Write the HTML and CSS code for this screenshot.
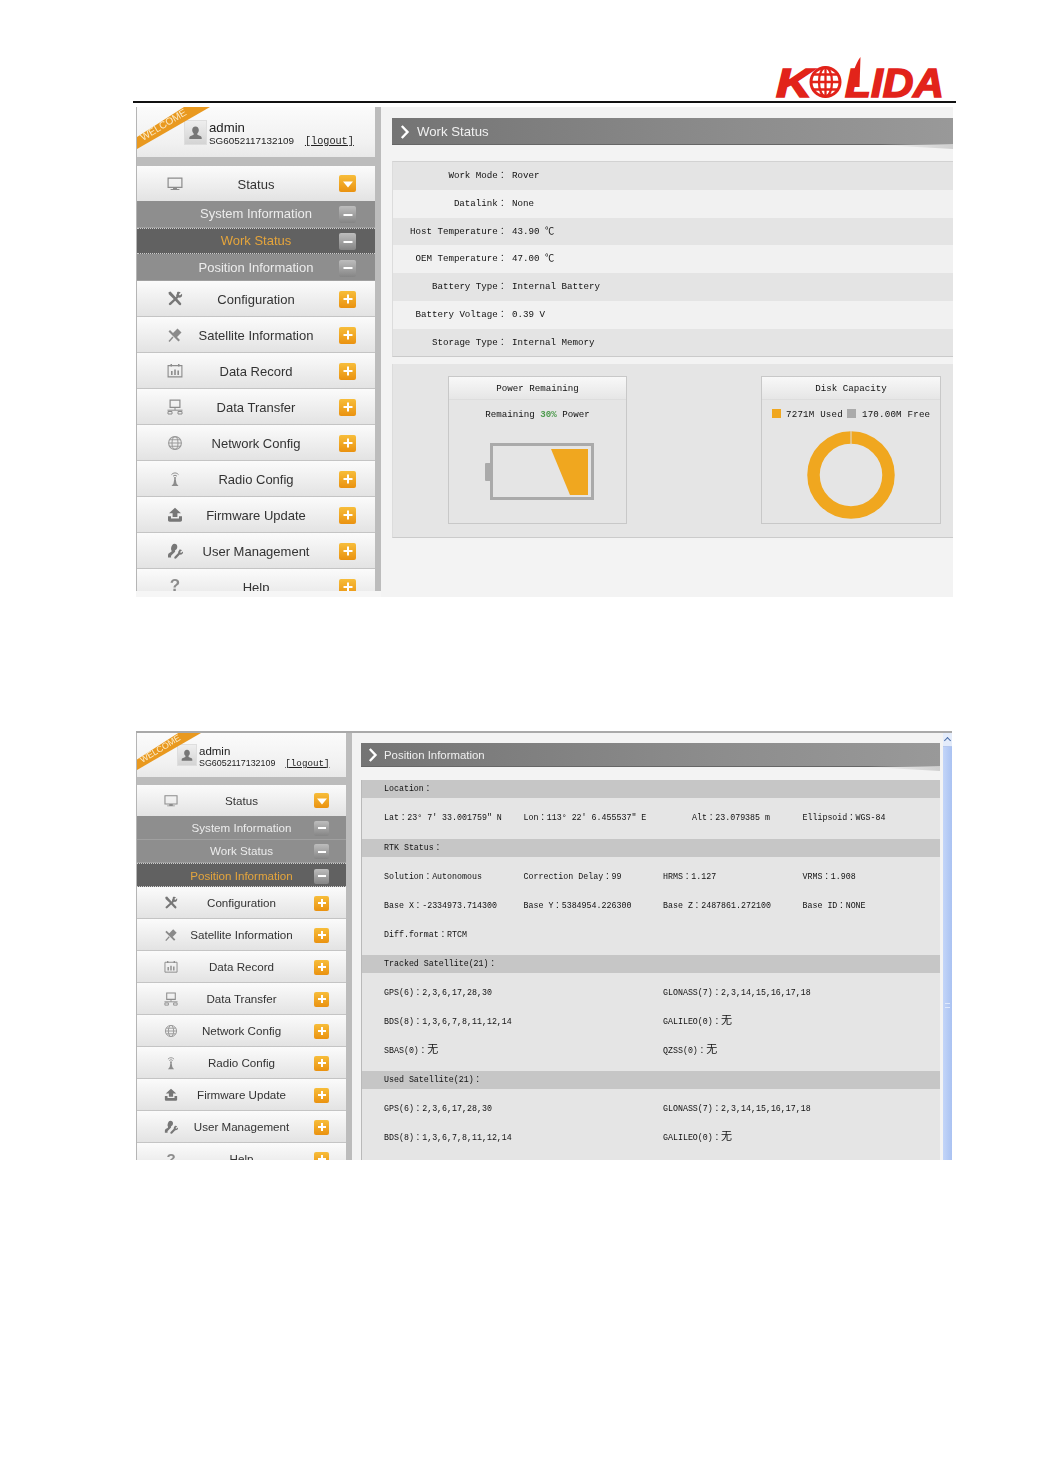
FILE: index.html
```html
<!DOCTYPE html>
<html lang="en">
<head>
<meta charset="utf-8">
<title>Kolida receiver web interface</title>
<link rel="stylesheet" href="styles.css">
</head>
<body>
<svg class="defs" aria-hidden="true">
  <symbol id="i-monitor" viewBox="0 0 16 16"><path fill="none" stroke="#8c8c8c" stroke-width="1.2" d="M1.1 2.1h13.8v9.3H1.1z"/><path fill="#8c8c8c" d="M6 11.5h4v1.6h2.4v1H3.6v-1H6z"/></symbol>
  <symbol id="i-tools" viewBox="0 0 16 16"><path fill="#777" d="M1.5 1.2l2-.6 4.6 5 5.8 6.4c.6.7.4 1.4-.1 1.9-.5.5-1.2.5-1.8-.1L6.400 7.700 1.800 3.300z"/><path fill="#777" d="M10.200 1.100c1.300-.5 2.600-.3 3.500.4l-2 1.800 1.200 1.200 2-1.800c.5 1.300.2 2.500-.6 3.300-.8.700-1.800.9-2.800.6L4 13.700c-.6.600-1.400.6-1.900.1-.5-.6-.4-1.300.2-1.800l7-6.200c-.3-1-.1-2.100.6-2.800z"/></symbol>
  <symbol id="i-sat" viewBox="0 0 16 16"><path fill="#8a8a8a" d="M10.500 1.500l4 4-5 5-4-4zM1.500 4.500L3 3l10 10-1.500 1.500z"/><path stroke="#8a8a8a" stroke-width="1.400" d="M6 10l-4 4.500"/></symbol>
  <symbol id="i-cal" viewBox="0 0 16 16"><path fill="none" stroke="#8c8c8c" stroke-width="1.100" d="M1.100 2.600h13.800v11.300H1.100z"/><path fill="#8c8c8c" d="M3.500 1h1.500v2.500H3.500zM11 1h1.500v2.500H11zM4 8h1.600v4H4zM7.200 6.500h1.600V12H7.200zM10.400 7.500H12V12h-1.600z"/></symbol>
  <symbol id="i-net" viewBox="0 0 16 16"><path fill="none" stroke="#8c8c8c" stroke-width="1.200" d="M3.100 1.100h9.800v7.300H3.100z"/><path fill="none" stroke="#8c8c8c" d="M8 8.500v2.500M.5 11.200h15"/><path fill="none" stroke="#8c8c8c" d="M1 12.500h4v2.500H1zM11 12.500h4v2.500h-4z"/></symbol>
  <symbol id="i-globe" viewBox="0 0 16 16"><g fill="none" stroke="#9a9a9a" stroke-width="1.100"><circle cx="8" cy="8" r="6.400"/><ellipse cx="8" cy="8" rx="3" ry="6.400"/><path d="M1.600 8h12.800M2.500 4.800h11M2.500 11.200h11"/></g></symbol>
  <symbol id="i-radio" viewBox="0 0 16 16"><g fill="none" stroke="#8c8c8c"><path d="M4.500 3.600C6.500 1.400 9.500 1.400 11.500 3.600M6 5.300C7.100 4 8.900 4 10 5.300"/></g><circle cx="8" cy="7" r="1.100" fill="#8c8c8c"/><path fill="#8c8c8c" d="M7.300 8h1.400l.8 4.500 2 2.500H4.500l2-2.500z"/></symbol>
  <symbol id="i-up" viewBox="0 0 16 16"><path fill="#777" d="M8 .8L14 6.200H10.400V10H5.600V6.200H2zM1 9.200h3v2.300h8V9.200h3V13c0 1-.7 1.700-1.700 1.700H2.700C1.700 14.700 1 14 1 13z"/></symbol>
  <symbol id="i-user" viewBox="0 0 16 16"><path fill="#777" d="M7.400.8c1.800 0 2.900 1.300 2.900 3 0 1.700-.9 3-2.200 3.400v1.500l-3.600 3.500c-.6.600-.6 1.500-.3 2.300H1v-2.500c0-1.700 2.400-2.500 3.500-3.200V7.200C3.500 6.700 4.300.8 7.400.800z"/><path fill="#777" d="M12.500 6.500c.9-.2 1.900.1 2.500.8L13 9l1 1.100 2-1.600c.2 1-.1 2-.9 2.600-.6.500-1.400.7-2.200.5l-3.600 3.700c-.5.500-1.200.5-1.700.1-.5-.5-.5-1.200 0-1.700l3.600-3.700c-.2-.9.100-1.800.8-2.500z"/></symbol>
  <symbol id="i-avatar" viewBox="0 0 24 25"><path fill="#777" d="M12 5.500c2.400 0 3.800 1.900 3.800 4.200 0 1.600-.7 3-1.700 3.800v1.600l4 1.700c.9.400 1 1.500 1 3.200H4.900c0-1.700.1-2.800 1-3.200l4-1.700v-1.600c-1-.8-1.700-2.200-1.700-3.800 0-2.300 1.400-4.200 3.800-4.200z"/></symbol>
  <symbol id="i-chev" viewBox="0 0 10 14"><path fill="none" stroke="#fff" stroke-width="2.400" d="M1.800 1l5.700 6-5.700 6"/></symbol>
</svg>

<header class="doc-header">
  <svg class="logo" viewBox="0 0 170 43" role="img" aria-label="Kolida">
    <text class="logo-text" x="2" y="40" textLength="36" lengthAdjust="spacingAndGlyphs">K</text>
    <g fill="none" stroke="#e2231a">
      <circle cx="51.500" cy="25" r="14.500" stroke-width="3"/>
      <ellipse cx="51.500" cy="25" rx="6.500" ry="14.500" stroke-width="2.300"/>
      <path stroke-width="2.300" d="M51.500 10.500v29M37.500 25h28M39.500 17.500h24M39.500 32.500h24"/>
    </g>
    <path fill="#e2231a" d="M86.500 0C82 6 79 14 75.500 30H85.500z"/>
    <text class="logo-text" x="71" y="40" textLength="99" lengthAdjust="spacingAndGlyphs">LIDA</text>
  </svg>
</header>

<section class="shot shot-work">
  <aside class="sidebar">
    <div class="welcome">
      <svg class="ribbon" viewBox="0 0 73 42" aria-hidden="true"><polygon fill="#e9991f" points="0,30 47,0 73,0 0,42"/><text class="ribbon-text" transform="translate(6 34) rotate(-31)">WELCOME</text></svg>
      <svg class="avatar"><use href="#i-avatar"/></svg>
      <div class="who">
        <div class="who-name">admin</div>
        <div class="who-line"><span class="serial">SG6052117132109</span><span class="logout">[logout]</span></div>
      </div>
    </div>
    <nav class="menu">
      <div class="row row-open"><svg class="ico"><use href="#i-monitor"/></svg><span class="lbl">Status</span><span class="btn btn-down"></span></div>
      <div class="sub"><span></span><span class="lbl">System Information</span><span class="btn btn-minus"></span></div>
      <div class="sub sub-active"><span></span><span class="lbl">Work Status</span><span class="btn btn-minus"></span></div>
      <div class="sub"><span></span><span class="lbl">Position Information</span><span class="btn btn-minus"></span></div>
      <div class="row"><svg class="ico"><use href="#i-tools"/></svg><span class="lbl">Configuration</span><span class="btn btn-plus"></span></div>
      <div class="row"><svg class="ico"><use href="#i-sat"/></svg><span class="lbl">Satellite Information</span><span class="btn btn-plus"></span></div>
      <div class="row"><svg class="ico"><use href="#i-cal"/></svg><span class="lbl">Data Record</span><span class="btn btn-plus"></span></div>
      <div class="row"><svg class="ico"><use href="#i-net"/></svg><span class="lbl">Data Transfer</span><span class="btn btn-plus"></span></div>
      <div class="row"><svg class="ico"><use href="#i-globe"/></svg><span class="lbl">Network Config</span><span class="btn btn-plus"></span></div>
      <div class="row"><svg class="ico"><use href="#i-radio"/></svg><span class="lbl">Radio Config</span><span class="btn btn-plus"></span></div>
      <div class="row"><svg class="ico"><use href="#i-up"/></svg><span class="lbl">Firmware Update</span><span class="btn btn-plus"></span></div>
      <div class="row"><svg class="ico"><use href="#i-user"/></svg><span class="lbl">User Management</span><span class="btn btn-plus"></span></div>
      <div class="row"><span class="ico-q">?</span><span class="lbl">Help</span><span class="btn btn-plus"></span></div>
    </nav>
  </aside>
  <main class="main">
    <h2 class="title"><svg class="chev"><use href="#i-chev"/></svg>Work Status</h2>
    <div class="kv-table">
      <div class="kv"><span class="k">Work Mode：</span><span>Rover</span></div>
      <div class="kv"><span class="k">Datalink：</span><span>None</span></div>
      <div class="kv"><span class="k">Host Temperature：</span><span>43.90 ℃</span></div>
      <div class="kv"><span class="k">OEM Temperature：</span><span>47.00 ℃</span></div>
      <div class="kv"><span class="k">Battery Type：</span><span>Internal Battery</span></div>
      <div class="kv"><span class="k">Battery Voltage：</span><span>0.39 V</span></div>
      <div class="kv"><span class="k">Storage Type：</span><span>Internal Memory</span></div>
    </div>
    <div class="gauges">
      <div class="card">
        <div class="card-head">Power Remaining</div>
        <div class="card-cap">Remaining&nbsp;<b class="pct">30%</b>&nbsp;Power</div>
        <svg class="battery" viewBox="0 0 109 57" aria-hidden="true">
          <rect x="0" y="20" width="6" height="18" rx="1" fill="#aaa"/>
          <rect x="6.500" y="1.500" width="101" height="54" fill="none" stroke="#aaa" stroke-width="3"/>
          <polygon fill="#f0a71f" points="66,6 103,6 103,52 85,52"/>
        </svg>
      </div>
      <div class="card card-disk">
        <div class="card-head">Disk Capacity</div>
        <div class="card-cap card-legend"><i class="sq sq-used"></i><span>7271M Used</span><i class="sq sq-free"></i><span>170.00M Free</span></div>
        <svg class="donut" viewBox="0 0 88 88" aria-hidden="true">
          <circle cx="44" cy="44" r="37.500" fill="none" stroke="#f0a71f" stroke-width="12.500"/>
          <path d="M44 0v14" stroke="#ddd" stroke-width="1"/>
        </svg>
      </div>
    </div>
  </main>
</section>

<section class="shot shot-pos">
  <aside class="sidebar">
    <div class="welcome">
      <svg class="ribbon" viewBox="0 0 73 42" aria-hidden="true"><polygon fill="#e9991f" points="0,30 47,0 73,0 0,42"/><text class="ribbon-text" transform="translate(6 34) rotate(-31)">WELCOME</text></svg>
      <svg class="avatar"><use href="#i-avatar"/></svg>
      <div class="who">
        <div class="who-name">admin</div>
        <div class="who-line"><span class="serial">SG6052117132109</span><span class="logout">[logout]</span></div>
      </div>
    </div>
    <nav class="menu">
      <div class="row row-open"><svg class="ico"><use href="#i-monitor"/></svg><span class="lbl">Status</span><span class="btn btn-down"></span></div>
      <div class="sub"><span></span><span class="lbl">System Information</span><span class="btn btn-minus"></span></div>
      <div class="sub"><span></span><span class="lbl">Work Status</span><span class="btn btn-minus"></span></div>
      <div class="sub sub-active"><span></span><span class="lbl">Position Information</span><span class="btn btn-minus"></span></div>
      <div class="row"><svg class="ico"><use href="#i-tools"/></svg><span class="lbl">Configuration</span><span class="btn btn-plus"></span></div>
      <div class="row"><svg class="ico"><use href="#i-sat"/></svg><span class="lbl">Satellite Information</span><span class="btn btn-plus"></span></div>
      <div class="row"><svg class="ico"><use href="#i-cal"/></svg><span class="lbl">Data Record</span><span class="btn btn-plus"></span></div>
      <div class="row"><svg class="ico"><use href="#i-net"/></svg><span class="lbl">Data Transfer</span><span class="btn btn-plus"></span></div>
      <div class="row"><svg class="ico"><use href="#i-globe"/></svg><span class="lbl">Network Config</span><span class="btn btn-plus"></span></div>
      <div class="row"><svg class="ico"><use href="#i-radio"/></svg><span class="lbl">Radio Config</span><span class="btn btn-plus"></span></div>
      <div class="row"><svg class="ico"><use href="#i-up"/></svg><span class="lbl">Firmware Update</span><span class="btn btn-plus"></span></div>
      <div class="row"><svg class="ico"><use href="#i-user"/></svg><span class="lbl">User Management</span><span class="btn btn-plus"></span></div>
      <div class="row"><span class="ico-q">?</span><span class="lbl">Help</span><span class="btn btn-plus"></span></div>
    </nav>
  </aside>
  <main class="main">
    <h2 class="title"><svg class="chev"><use href="#i-chev"/></svg>Position Information</h2>
    <div class="sec sec-first">
      <div class="sec-head">Location：</div>
      <div class="sec-body">
        <div class="grid4">
          <span>Lat：23° 7′ 33.001759″ N</span><span>Lon：113° 22′ 6.455537″ E</span><span class="alt">Alt：23.079385 m</span><span>Ellipsoid：WGS-84</span>
        </div>
      </div>
    </div>
    <div class="sec">
      <div class="sec-head">RTK Status：</div>
      <div class="sec-body">
        <div class="grid4">
          <span>Solution：Autonomous</span><span>Correction Delay：99</span><span>HRMS：1.127</span><span>VRMS：1.908</span>
          <span>Base X：-2334973.714300</span><span>Base Y：5384954.226300</span><span>Base Z：2487861.272100</span><span>Base ID：NONE</span>
          <span>Diff.format：RTCM</span>
        </div>
      </div>
    </div>
    <div class="sec">
      <div class="sec-head">Tracked Satellite(21)：</div>
      <div class="sec-body">
        <div class="grid2">
          <span>GPS(6)：2,3,6,17,28,30</span><span>GLONASS(7)：2,3,14,15,16,17,18</span>
          <span>BDS(8)：1,3,6,7,8,11,12,14</span><span>GALILEO(0)：<em class="none">无</em></span>
          <span>SBAS(0)：<em class="none">无</em></span><span>QZSS(0)：<em class="none">无</em></span>
        </div>
      </div>
    </div>
    <div class="sec sec-last">
      <div class="sec-head">Used Satellite(21)：</div>
      <div class="sec-body">
        <div class="grid2">
          <span>GPS(6)：2,3,6,17,28,30</span><span>GLONASS(7)：2,3,14,15,16,17,18</span>
          <span>BDS(8)：1,3,6,7,8,11,12,14</span><span>GALILEO(0)：<em class="none">无</em></span>
        </div>
      </div>
    </div>
  </main>
  <div class="scrollbar" aria-hidden="true">
    <span class="scroll-up"></span>
    <span class="scroll-grip"></span>
  </div>
</section>
</body>
</html>
```
FILE: styles.css
```css
* { box-sizing: border-box; }

html, body { margin: 0; padding: 0; background: #fff; }

body {
  width: 1043px;
  height: 1474px;
  overflow: hidden;
  font-family: "Liberation Sans", "Noto Sans CJK SC", sans-serif;
  color: #222;
}

.defs { width: 0; height: 0; position: absolute; }

/* document header */
.doc-header {
  width: 823px;
  height: 103px;
  margin-left: 133px;
  padding: 57px 12px 0 0;
  display: flex;
  justify-content: flex-end;
  align-items: flex-start;
  border-bottom: 2px solid #111;
}

.logo { width: 170px; height: 43px; overflow: visible; }

.logo-text {
  font-family: "Liberation Sans", sans-serif;
  font-weight: 700;
  font-style: italic;
  font-size: 40px;
  fill: #e2231a;
  stroke: #e2231a;
  stroke-width: 1.6px;
}

/* screenshot blocks */
.shot {
  display: flex;
  align-items: flex-start;
  margin-left: 136px;
  overflow: hidden;
  background: #f6f6f6;
  filter: blur(0.3px);
  --mono: "Liberation Mono", "Noto Sans CJK TC", monospace;
}

.shot-work {
  width: 817px;
  height: 490px;
  margin-top: 4px;
  --side-w: 239px;
  --side-h: 484px;
  --welcome-h: 50px;
  --gap-h: 9px;
  --row-h: 36px;
  --first-h: 35px;
  --sub-h: 26.67px;
  --col: 76px;
  --lbl: 13px;
  --lbl-top: 2px;
  --sub-top: 0px;
  --ico: 16px;
  --btn: 17px;
  --btn-end: 19px;
  --btn-bar: 9px;
  --ava-l: 48px;
  --ava: 23px;
  --name: 13.2px;
  --serial: 9.9px;
  --logout: 10.2px;
  --logout-gap: 11px;
  --ribbon-w: 73px;
  --ribbon-h: 42px;
}

.shot-pos {
  width: 816px;
  height: 429px;
  margin-top: 134px;
  border-top: 2px solid #a9a9a9;
  background: #fff;
  --side-w: 210px;
  --side-h: 427px;
  --welcome-h: 44px;
  --gap-h: 8px;
  --row-h: 32px;
  --first-h: 31px;
  --sub-h: 23.67px;
  --col: 68px;
  --lbl: 11.6px;
  --lbl-top: 0px;
  --sub-top: 0px;
  --ico: 14px;
  --btn: 15px;
  --btn-end: 17px;
  --btn-bar: 8px;
  --ava-l: 41px;
  --ava: 20px;
  --name: 11.5px;
  --serial: 8.9px;
  --logout: 9.2px;
  --logout-gap: 10px;
  --ribbon-w: 64px;
  --ribbon-h: 37px;
}

/* sidebar */
.sidebar {
  flex: none;
  width: calc(var(--side-w) + 6px);
  height: var(--side-h);
  overflow: hidden;
  background: #bcbcbc;
  border-left: 1px solid #b5b5b5;
  border-right: 6px solid #bcbcbc;
}

.welcome {
  position: relative;
  height: var(--welcome-h);
  margin-bottom: var(--gap-h);
  padding-left: calc(var(--ava-l) - 1px);
  display: flex;
  align-items: center;
  gap: 2px;
  background: linear-gradient(#fbfbfb, #f1f1f1 70%, #e9e9e9);
}

.ribbon {
  position: absolute;
  left: 0;
  top: 0;
  width: var(--ribbon-w);
  height: var(--ribbon-h);
}

.ribbon-text {
  font-size: 10px;
  fill: #fbeccb;
}

.avatar {
  flex: none;
  width: var(--ava);
  height: calc(var(--ava) + 2px);
  background: linear-gradient(#eee, #d4d4d4);
  border: 1px solid #dedede;
}

.who { padding-top: 4px; }

.who-name { font-size: var(--name); line-height: 1.05; }

.who-line {
  display: flex;
  align-items: baseline;
  gap: var(--logout-gap);
  white-space: nowrap;
}

.serial { font-size: var(--serial); }

.logout {
  font-family: var(--mono);
  font-size: var(--logout);
  text-decoration: underline;
}

.row, .sub {
  display: grid;
  grid-template-columns: var(--col) minmax(0, 1fr) var(--col);
  align-items: center;
}

.row {
  height: var(--row-h);
  background: linear-gradient(#fbfbfb, #e3e3e3);
  border-bottom: 1px solid #c4c4c4;
  color: #333;
}

.row-open { height: var(--first-h); border-bottom: 0; }

.sub {
  height: var(--sub-h);
  background: #8e8e8e;
  color: #ececec;
  border-bottom: 1px solid #a0a0a0;
}

.sub-active {
  background: #616161;
  color: #e5a53c;
  border-top: 1px dotted #ccc;
  border-bottom: 1px dotted #ccc;
}

.lbl {
  justify-self: center;
  padding-top: var(--lbl-top);
  font-size: var(--lbl);
  text-align: center;
  white-space: nowrap;
}

.sub .lbl { padding-top: var(--sub-top); }

.ico {
  justify-self: center;
  width: var(--ico);
  height: var(--ico);
}

.row:not(.row-open) .ico { margin-top: 2px; }

.ico-q {
  justify-self: center;
  font-size: calc(var(--ico) + 1px);
  font-weight: 700;
  color: #8c8c8c;
}

.btn {
  justify-self: end;
  position: relative;
  width: var(--btn);
  height: var(--btn);
  margin-right: var(--btn-end);
  border-radius: 2px;
}

.row:not(.row-open) .btn, .sub .btn { margin-top: 2px; }

.btn-plus, .btn-down { background: linear-gradient(#f7bd3a, #ea9210); }

.btn-minus { background: linear-gradient(#bdbdbd, #858585); }

.btn-plus::before, .btn-plus::after, .btn-minus::before {
  content: "";
  position: absolute;
  left: 50%;
  top: 50%;
  width: var(--btn-bar);
  height: 2px;
  background: #fff;
  transform: translate(-50%, -50%);
}

.btn-plus::after {
  width: 2px;
  height: var(--btn-bar);
}

.btn-down::before {
  content: "";
  position: absolute;
  left: 50%;
  top: 50%;
  border: 5px solid transparent;
  border-top: 6px solid #fff;
  border-bottom: 0;
  transform: translate(-50%, -40%);
}

/* main area */
.main {
  flex: 1;
  min-width: 0;
  height: 100%;
  background: #f3f3f3;
}

.shot-work .main { padding: 11px 0 0 11px; }
.shot-pos .main { flex: none; width: 591px; padding: 10px 3px 0 9px; }

.title {
  position: relative;
  display: flex;
  align-items: center;
  margin: 0;
  padding-top: 1px;
  font-weight: 400;
  color: #f0f0f0;
  background: linear-gradient(90deg, #747474, #8c8c8c 60%, #999);
  border-bottom: 1px solid #666;
}

.title::after {
  content: "";
  position: absolute;
  right: 0;
  top: 100%;
  width: 90px;
  height: 5px;
  background: linear-gradient(100deg, transparent 20%, #cfcfcf);
  clip-path: polygon(0 0, 100% 0, 100% 100%);
}

.shot-work .title { height: 27px; font-size: 13.2px; padding-left: 8px; }
.shot-pos .title { height: 24px; font-size: 11.4px; padding-left: 7px; }

.chev { flex: none; width: 10px; height: 14px; margin-right: 7px; }

.shot-pos .chev { margin-right: 6px; }

/* work status table */
.kv-table {
  margin-top: 16px;
  border-top: 1px solid #d2d2d2;
  border-bottom: 1px solid #cacaca;
  border-left: 1px solid #dcdcdc;
  font-family: var(--mono);
  font-size: 9.170px;
  color: #111;
}

.kv {
  display: flex;
  height: 27.75px;
  line-height: 27px;
  background: #e4e4e4;
  white-space: nowrap;
}

.kv:nth-child(even) { background: #f1f1f1; }

.k {
  width: 114px;
  margin-right: 5px;
  text-align: right;
}

/* gauges */
.gauges {
  display: flex;
  justify-content: space-between;
  height: 174px;
  margin-top: 7px;
  padding: 12px 12px 0 55px;
  background: #e5e5e5;
  border-bottom: 1px solid #cbcbcb;
  border-left: 1px solid #dcdcdc;
  font-family: var(--mono);
  font-size: 9.170px;
  color: #111;
}

.card {
  width: 179px;
  height: 148px;
  border: 1px solid #c8c8c8;
  text-align: center;
}

.card-disk { width: 180px; }

.card-head {
  height: 23px;
  line-height: 24px;
  background: linear-gradient(#f8f8f8, #e6e6e6);
  border-bottom: 1px solid #ddd;
}

.card-cap {
  height: 30px;
  line-height: 30px;
  white-space: nowrap;
}

.pct { color: #4c9a4c; }

.card-legend {
  display: flex;
  align-items: center;
  padding-left: 10px;
  letter-spacing: 0.2px;
}

.sq { flex: none; width: 9px; height: 9px; margin-bottom: 3px; }
.sq-used { background: #f0a71f; margin-right: 5px; }
.sq-free { background: #aaa; margin: 0 6px 3px 4px; }

.battery {
  display: block;
  width: 109px;
  height: 57px;
  margin: 13px auto 0 36px;
}

.donut {
  display: block;
  width: 88px;
  height: 88px;
  margin: 1px auto 0;
}

/* position page */
.sec {
  border-left: 1px solid #b9b9b9;
  font-family: var(--mono);
  font-size: 8.300px;
  color: #111;
}

.sec-first { margin-top: 13px; }

.sec-head {
  height: 18px;
  line-height: 17px;
  padding-left: 22px;
  background: #c6c6c6;
}

.sec-body {
  padding: 3px 0 8px 22px;
  background: #e5e5e5;
}

.sec-first .sec-body { padding-bottom: 9px; }

.sec-last .sec-body { padding-bottom: 12px; }

.grid4, .grid2 {
  display: grid;
  grid-auto-rows: 29px;
  align-items: center;
  white-space: nowrap;
}

.grid4 { grid-template-columns: repeat(4, 139.5px); }
.grid2 { grid-template-columns: repeat(2, 279px); }

.alt { padding-left: 29px; }

.none {
  font-style: normal;
  font-size: 11px;
  line-height: 1;
  font-family: "Noto Sans CJK SC", sans-serif;
}

/* scrollbar */
.scrollbar {
  flex: none;
  position: relative;
  width: 9px;
  height: 100%;
  background: linear-gradient(90deg, #c3d5f8, #aac2f2);
}

.scroll-up {
  display: block;
  height: 14px;
  background: #e4ecfb;
  border-bottom: 1px solid #b5c8ee;
}

.scroll-up::before {
  content: "";
  position: absolute;
  left: 2px;
  top: 5px;
  width: 4px;
  height: 4px;
  border-left: 1px solid #4a6ea8;
  border-top: 1px solid #4a6ea8;
  transform: rotate(45deg);
}

.scroll-grip {
  position: absolute;
  left: 2px;
  top: 270px;
  width: 5px;
  height: 5px;
  border-top: 1px solid #dfe8fb;
  border-bottom: 1px solid #dfe8fb;
}
```
